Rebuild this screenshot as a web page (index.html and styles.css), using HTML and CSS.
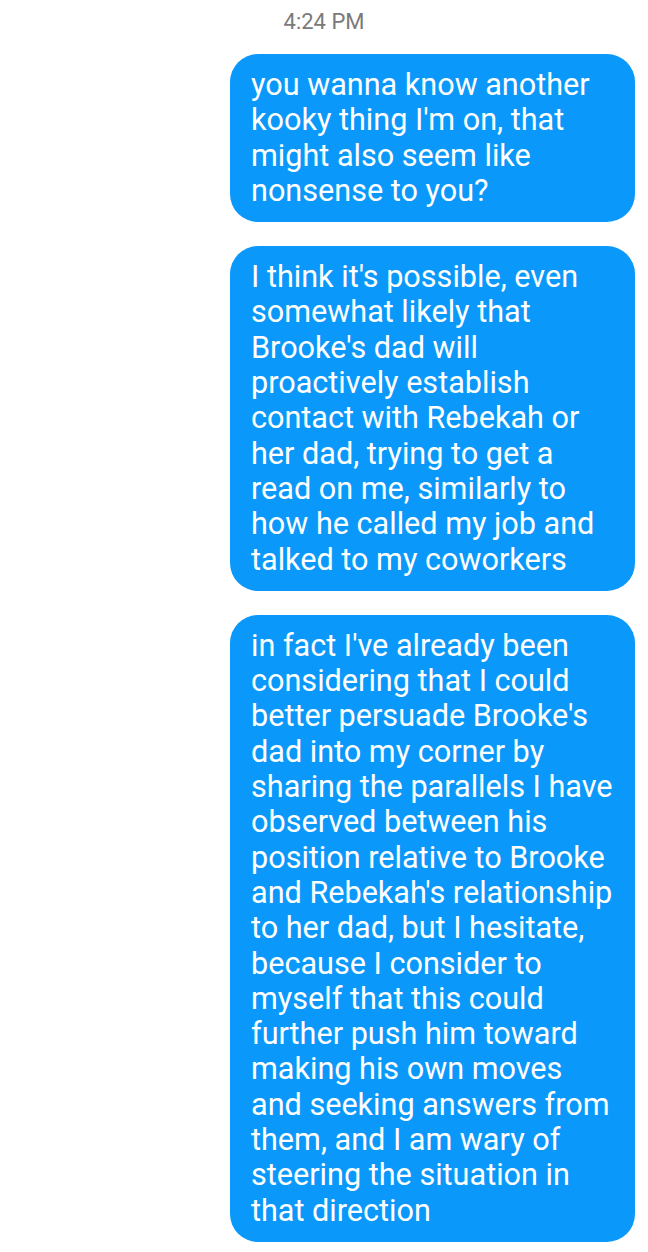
FILE: index.html
```html
<!DOCTYPE html>
<html>
<head>
<meta charset="utf-8">
<link rel="stylesheet" href="styles.css">
</head>
<body>
<div class="thread">
  <div class="time">4:24 PM</div>
  <div class="bubble">you wanna know another<br>kooky thing I'm on, that<br>might also seem like<br>nonsense to you?</div>
  <div class="bubble">I think it's possible, even<br>somewhat likely that<br>Brooke's dad will<br>proactively establish<br>contact with Rebekah or<br>her dad, trying to get a<br>read on me, similarly to<br>how he called my job and<br>talked to my coworkers</div>
  <div class="bubble">in fact I've already been<br>considering that I could<br>better persuade Brooke's<br>dad into my corner by<br>sharing the parallels I have<br>observed between his<br>position relative to Brooke<br>and Rebekah's relationship<br>to her dad, but I hesitate,<br>because I consider to<br>myself that this could<br>further push him toward<br>making his own moves<br>and seeking answers from<br>them, and I am wary of<br>steering the situation in<br>that direction</div>
</div>
</body>
</html>
```
FILE: styles.css
```css
html, body {
  margin: 0;
  padding: 0;
  background: #ffffff;
}
.thread {
  display: flex;
  flex-direction: column;
  align-items: flex-end;
  padding: 9px 13px 0 0;
  gap: 24px;
  font-family: Roboto, "Noto Sans", sans-serif;
}
.time {
  align-self: center;
  margin-right: -13px;
  color: #7a7a7a;
  font-size: 22px;
  line-height: 26px;
  margin-bottom: -5px;
}
.bubble {
  width: 405px;
  box-sizing: border-box;
  background: #0a99fa;
  color: #ffffff;
  border-radius: 28px;
  padding: 13px 14px 14px 21px;
  font-size: 30.6px;
  line-height: 35.3px;
  white-space: nowrap;
}
```
